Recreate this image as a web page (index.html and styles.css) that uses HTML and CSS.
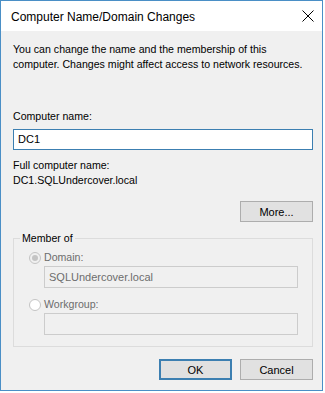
FILE: index.html
```html
<!DOCTYPE html>
<html lang="en">
<head>
    <meta charset="UTF-8">
    <title>Computer Name/Domain Changes</title>
    <link rel="stylesheet" href="styles.css">
</head>
<body>
<div class="window">
    <div class="title-bar">
        <span class="title">Computer Name/Domain Changes</span>
        <svg class="close" width="12" height="12" viewBox="0 0 12 12">
            <path d="M0.5 0.5 L11.5 11.5 M11.5 0.5 L0.5 11.5" stroke="#000" stroke-width="1" fill="none"/>
        </svg>
    </div>
    <div class="content">
        <p class="desc">You can change the name and the membership of this<br>computer. Changes might affect access to network resources.</p>

        <div class="label">Computer name:</div>
        <div class="input active">DC1</div>

        <div class="label full-label">Full computer name:</div>
        <div class="label">DC1.SQLUndercover.local</div>

        <div class="more-row">
            <button type="button" class="btn">More...</button>
        </div>

        <fieldset class="group">
            <legend>Member of</legend>
            <div class="radio-row">
                <span class="radio checked"></span>
                <span class="muted">Domain:</span>
            </div>
            <div class="input disabled">SQLUndercover.local</div>
            <div class="radio-row workgroup">
                <span class="radio"></span>
                <span class="muted">Workgroup:</span>
            </div>
            <div class="input disabled"></div>
        </fieldset>

        <div class="actions">
            <button type="button" class="btn default">OK</button>
            <button type="button" class="btn">Cancel</button>
        </div>
    </div>
</div>
</body>
</html>
```

FILE: styles.css
```css
* {
    padding: 0;
    margin: 0;
    box-sizing: border-box;
}

body {
    background: #fff;
    font-family: "Liberation Sans", Arial, sans-serif;
    font-size: 10.6px;
    color: #000;
}

.window {
    width: 323px;
    height: 391px;
    border: 1px solid #4a8fc6;
    background: #f0f0f0;
    display: flex;
    flex-direction: column;
}

.title-bar {
    height: 30px;
    background: #fff;
    display: flex;
    align-items: center;
    justify-content: space-between;
    padding: 0 8px 0 10px;
}

.title {
    font-size: 12px;
    margin-top: 1px;
}

.close {
    display: block;
}

.content {
    padding: 11px 9px 0 12px;
    line-height: 15px;
}

.desc {
    margin-bottom: 37px;
    white-space: nowrap;
}

.label {
    height: 15px;
}

.input {
    height: 21px;
    margin-top: 5px;
    border: 1px solid #3c7fb1;
    background: #fff;
    padding: 0 4px;
    line-height: 19px;
    font-size: 11px;
}

.full-label {
    margin-top: 8px;
}

.more-row {
    display: flex;
    justify-content: flex-end;
    margin-top: 13px;
}

.btn {
    width: 73px;
    height: 21px;
    background: #e1e1e1;
    border: 1px solid #adadad;
    font-family: inherit;
    font-size: 11px;
    color: #000;
}

.btn.default {
    border: 2px solid #3c7fb1;
}

.group {
    margin-top: 9px;
    border: 1px solid #dcdcdc;
    padding: 5px 14px 11px 15px;
}

.group legend {
    margin-left: -9px;
    padding: 0 2px;
    line-height: 14px;
}

.radio-row {
    display: flex;
    align-items: center;
    gap: 3px;
    height: 15px;
}

.workgroup {
    margin-top: 9px;
}

.radio {
    width: 12px;
    height: 12px;
    border-radius: 50%;
    border: 1px solid #c4c4c4;
    background: #fff;
    display: flex;
    align-items: center;
    justify-content: center;
}

.radio.checked {
    background: #f0f0f0;
}

.radio.checked::after {
    content: "";
    width: 6px;
    height: 6px;
    border-radius: 50%;
    background: #c4c4c4;
}

.muted {
    color: #6d6d6d;
}

.group .input {
    margin-left: 15px;
    height: 22px;
    margin-top: 1px;
    border-color: #cccccc;
    background: #f0f0f0;
    color: #6d6d6d;
    line-height: 20px;
}

.actions {
    display: flex;
    justify-content: flex-end;
    gap: 8px;
    margin-top: 12px;
}
```
